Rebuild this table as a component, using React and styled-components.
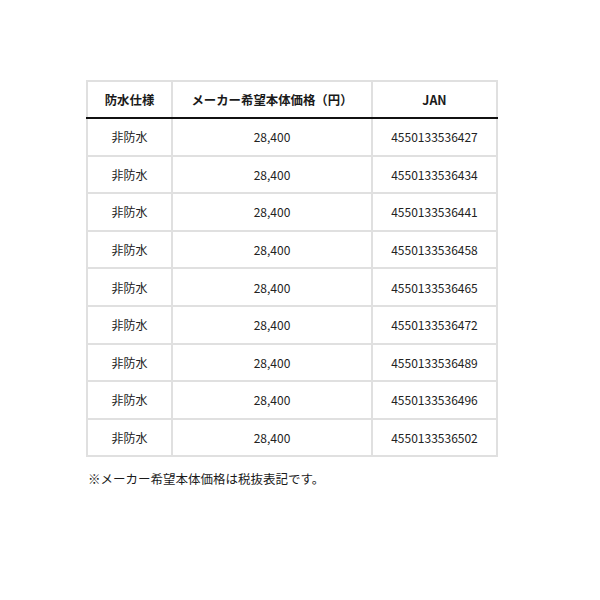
import React from 'react';
import styled, { createGlobalStyle } from 'styled-components';

const GlobalStyle = createGlobalStyle`
  body {
    margin: 0;
    background: #fff;
    font-family: "Noto Sans CJK JP", "Noto Sans", sans-serif;
    color: #222;
  }
`;

const Page = styled.div`
  padding: 80px 0 0 86px;
`;

const Table = styled.table`
  border-collapse: collapse;
  width: 404px;
  font-size: 12px;
  table-layout: fixed;
`;

const Th = styled.th`
  width: ${(p) => p.w}px;
  height: 35px;
  padding: 0;
  border: 2px solid #e0e0e0;
  border-bottom: 2px solid #111;
  font-size: 12.4px;
  font-weight: 700;
  text-align: center;
  color: #1a1a1a;
`;

const Td = styled.td`
  height: 35.6px;
  padding: 0;
  border: 2px solid #e0e0e0;
  text-align: center;
  color: #222;
`;

const Note = styled.p`
  margin: 12px 0 0 2px;
  font-size: 12.5px;
  color: #1a1a1a;
`;

const jans = [
  '4550133536427',
  '4550133536434',
  '4550133536441',
  '4550133536458',
  '4550133536465',
  '4550133536472',
  '4550133536489',
  '4550133536496',
  '4550133536502',
];

const App = () => (
  <>
    <GlobalStyle />
    <Page>
      <Table>
        <thead>
          <tr>
            <Th w={83}>防水仕様</Th>
            <Th w={198}>メーカー希望本体価格（円）</Th>
            <Th w={123}>JAN</Th>
          </tr>
        </thead>
        <tbody>
          {jans.map((jan) => (
            <tr key={jan}>
              <Td>非防水</Td>
              <Td>28,400</Td>
              <Td>{jan}</Td>
            </tr>
          ))}
        </tbody>
      </Table>
      <Note>※メーカー希望本体価格は税抜表記です。</Note>
    </Page>
  </>
);

export default App;
